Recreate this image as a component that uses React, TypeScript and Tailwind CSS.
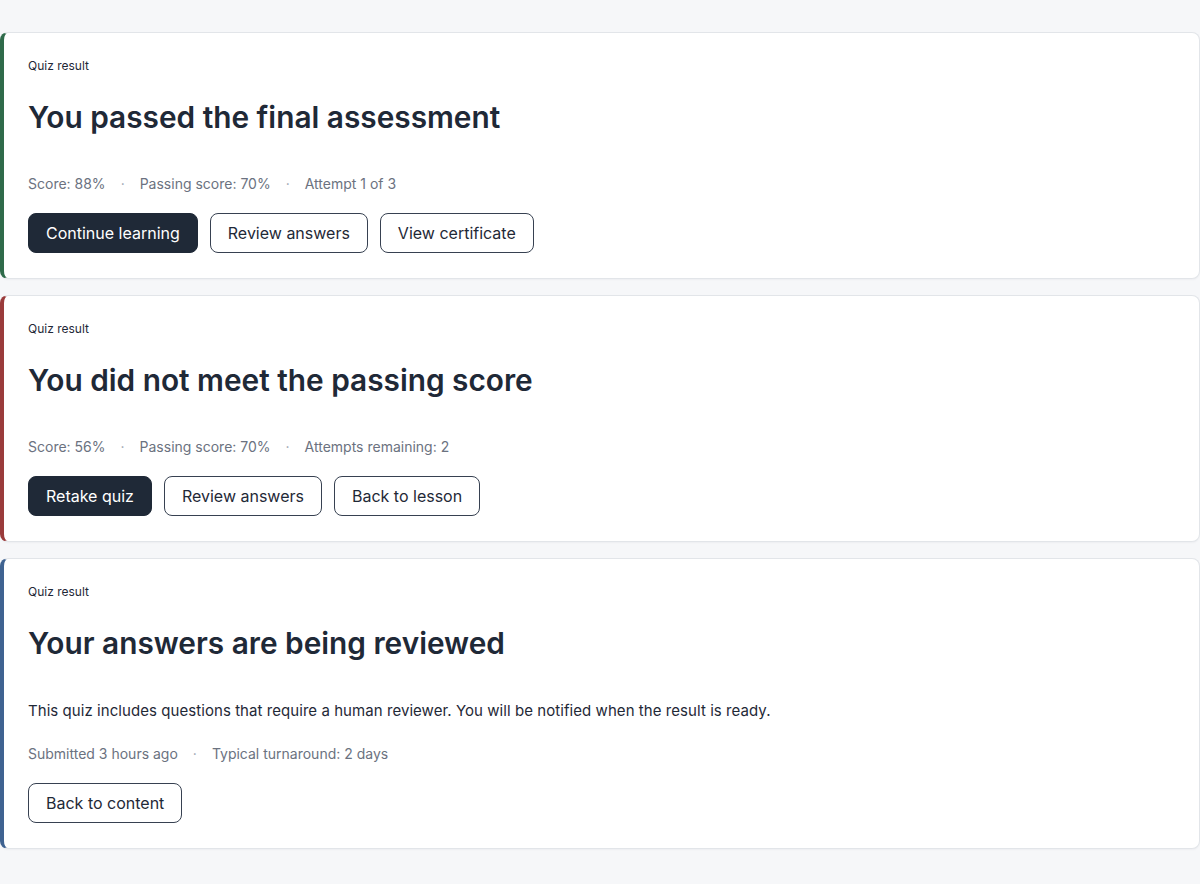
import React from "react";

type Action = { label: string; primary?: boolean };

interface ResultCardProps {
  accent: string;
  title: string;
  description?: string;
  meta: string[];
  actions: Action[];
}

function ResultCard({ accent, title, description, meta, actions }: ResultCardProps) {
  return (
    <section
      className={`rounded-lg border border-[#e2e5e9] border-l-4 bg-white px-6 pt-[25px] pb-[25px] shadow-[0_1px_2px_rgba(16,24,40,0.04)] ${accent}`}
    >
      <p className="text-[12px] leading-4 text-[#1f2937]">Quiz result</p>
      <h2 className="mt-[25px] text-[29.8px] leading-9 font-semibold text-[#1f2937]">
        {title}
      </h2>
      {description && (
        <p className="mt-[40px] text-[15px] leading-5 tracking-[0.004em] text-[#1f2937]">
          {description}
        </p>
      )}
      <div
        className={`flex items-center gap-[15px] text-[14px] leading-5 text-[#6b7280] ${
          description ? "mt-[23px]" : "mt-[39px]"
        }`}
      >
        {meta.map((m, i) => (
          <React.Fragment key={m}>
            {i > 0 && <span className="text-[#9ca3af]">·</span>}
            <span>{m}</span>
          </React.Fragment>
        ))}
      </div>
      <div className="mt-[19px] flex gap-3">
        {actions.map((a) =>
          a.primary ? (
            <button
              key={a.label}
              className="h-10 rounded-lg border border-[#1f2937] bg-[#1f2937] px-[17px] text-[16px] font-normal text-white"
            >
              {a.label}
            </button>
          ) : (
            <button
              key={a.label}
              className="h-10 rounded-lg border border-[#374151] bg-white px-[17px] text-[16px] font-normal text-[#1f2937]"
            >
              {a.label}
            </button>
          )
        )}
      </div>
    </section>
  );
}

export default function App() {
  return (
    <div
      className="min-h-[884px] bg-[#f6f7f9] pt-8 pb-8"
      style={{ fontFamily: "Inter, 'Noto Sans', sans-serif" }}
    >
      <div className="flex flex-col gap-4">
        <ResultCard
          accent="border-l-[#2f6b4a]"
          title="You passed the final assessment"
          meta={["Score: 88%", "Passing score: 70%", "Attempt 1 of 3"]}
          actions={[
            { label: "Continue learning", primary: true },
            { label: "Review answers" },
            { label: "View certificate" },
          ]}
        />
        <ResultCard
          accent="border-l-[#9a3b3b]"
          title="You did not meet the passing score"
          meta={["Score: 56%", "Passing score: 70%", "Attempts remaining: 2"]}
          actions={[
            { label: "Retake quiz", primary: true },
            { label: "Review answers" },
            { label: "Back to lesson" },
          ]}
        />
        <ResultCard
          accent="border-l-[#3f6391]"
          title="Your answers are being reviewed"
          description="This quiz includes questions that require a human reviewer. You will be notified when the result is ready."
          meta={["Submitted 3 hours ago", "Typical turnaround: 2 days"]}
          actions={[{ label: "Back to content" }]}
        />
      </div>
    </div>
  );
}
